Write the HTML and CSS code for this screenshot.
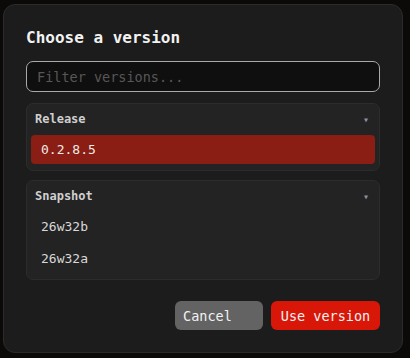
FILE: index.html
```html
<!DOCTYPE html>
<html>
<head>
<meta charset="utf-8">
<link rel="stylesheet" href="styles.css">
</head>
<body>
<div class="dialog">
  <h1 class="title">Choose a version</h1>
  <input class="filter" type="text" placeholder="Filter versions...">
  <div class="group">
    <div class="group-head"><span>Release</span><span class="caret">▾</span></div>
    <div class="item selected">0.2.8.5</div>
  </div>
  <div class="group">
    <div class="group-head"><span>Snapshot</span><span class="caret">▾</span></div>
    <div class="item">26w32b</div>
    <div class="item">26w32a</div>
  </div>
  <div class="actions">
    <button class="btn cancel">Cancel</button>
    <button class="btn primary">Use version</button>
  </div>
</div>
</body>
</html>
```
FILE: styles.css
```css
html, body {
  margin: 0;
  background: #0b0a09;
}
body {
  padding: 4px 7px 5px 3px;
  font-family: "DejaVu Sans Mono", "Liberation Mono", monospace;
  color: #e8e8e8;
}
.dialog {
  box-sizing: border-box;
  width: 400px;
  height: 349px;
  background: #1c1c1c;
  border: 1px solid #2b2b2b;
  border-radius: 12px;
  padding: 23px 22px 22px 22px;
  display: flex;
  flex-direction: column;
}
.title {
  margin: 0;
  font-size: 16px;
  line-height: 20px;
  font-weight: bold;
  color: #f2f2f2;
}
.filter {
  margin-top: 13px;
  box-sizing: border-box;
  height: 31px;
  width: 100%;
  background: #0f0f0f;
  border: 1px solid #a9a9a9;
  border-radius: 7px;
  padding: 0 10px;
  font-family: inherit;
  font-size: 13.5px;
  color: #ddd;
  outline: none;
}
.filter::placeholder {
  color: #575757;
}
.group {
  margin-top: 11px;
  background: #232323;
  border: 1px solid #2c2c2c;
  border-radius: 7px;
  padding: 0 4px 4px 4px;
}
.group + .group {
  margin-top: 9px;
}
.group-head {
  display: flex;
  justify-content: space-between;
  align-items: center;
  height: 30px;
  padding: 0 6px 0 4px;
  font-size: 12px;
  font-weight: bold;
  color: #cfcfcf;
}
.caret {
  font-size: 10px;
  color: #8f8f9e;
  font-weight: normal;
}
.item {
  height: 32px;
  line-height: 32px;
  padding: 0 10px;
  font-size: 13px;
  color: #d8d8d8;
  border-radius: 4px;
}
.item.selected {
  height: 29px;
  line-height: 29px;
  margin-top: 1px;
  margin-bottom: 2px;
  background: #8a1d14;
  color: #f0ece6;
}
.actions {
  margin-top: auto;
  display: flex;
  justify-content: flex-end;
  gap: 8px;
}
.btn {
  height: 29px;
  border: none;
  border-radius: 6px;
  font-family: inherit;
  font-size: 13.5px;
  padding: 0 8px;
  color: #f2f2f2;
}
.cancel {
  width: 88px;
  text-align: left;
  background: #636363;
}
.primary {
  width: 109px;
  background: #d91709;
}
```
